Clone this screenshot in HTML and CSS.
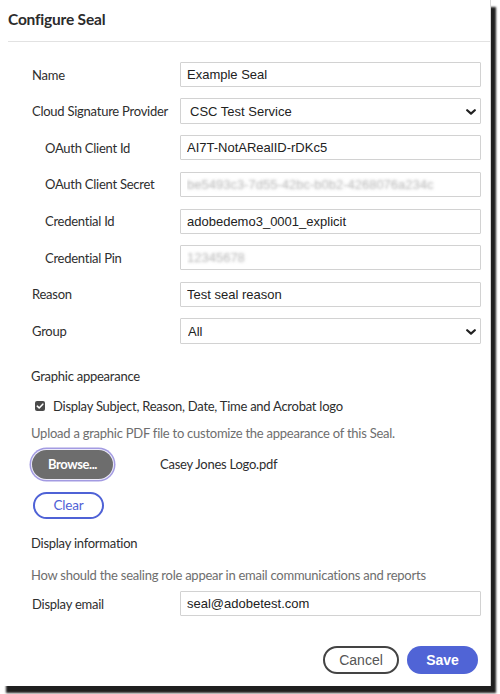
FILE: index.html
```html
<!DOCTYPE html>
<html lang="en">
<head>
<meta charset="utf-8">
<title>Configure Seal</title>
<link rel="stylesheet" href="styles.css">
</head>
<body>
<div class="dialog">
  <header class="title-bar"><h1 class="title">Configure Seal</h1></header>
  <div class="body">
    <div class="grid">
      <label class="label">Name</label>
      <input class="field" type="text" value="Example Seal">

      <label class="label">Cloud Signature Provider</label>
      <div class="select-wrap">
        <select class="select"><option>CSC Test Service</option></select>
        <svg class="chev" width="10" height="6" viewBox="0 0 10 6"><path d="M1.2 1.2 L5 4.6 L8.8 1.2" fill="none" stroke="#222" stroke-width="2.2" stroke-linecap="round" stroke-linejoin="round"/></svg>
      </div>

      <label class="label sub">OAuth Client Id</label>
      <input class="field" type="text" value="AI7T-NotARealID-rDKc5">

      <label class="label sub">OAuth Client Secret</label>
      <input class="field blurred" type="text" value="be5493c3-7d55-42bc-b0b2-4268076a234c">

      <label class="label sub">Credential Id</label>
      <input class="field" type="text" value="adobedemo3_0001_explicit">

      <label class="label sub">Credential Pin</label>
      <input class="field blurred" type="text" value="12345678">

      <label class="label">Reason</label>
      <input class="field" type="text" value="Test seal reason">

      <label class="label">Group</label>
      <div class="select-wrap">
        <select class="select group"><option>All</option></select>
        <svg class="chev" width="10" height="6" viewBox="0 0 10 6"><path d="M1.2 1.2 L5 4.6 L8.8 1.2" fill="none" stroke="#222" stroke-width="2.2" stroke-linecap="round" stroke-linejoin="round"/></svg>
      </div>
    </div>

    <h2 class="section graphic">Graphic appearance</h2>
    <div class="check-row">
      <span class="check"><svg width="10" height="10" viewBox="0 0 10 10"><path d="M2.3 5.2 L4.2 7 L7.8 3.2" fill="none" stroke="#fff" stroke-width="1.6" stroke-linecap="round" stroke-linejoin="round"/></svg></span>
      <span class="check-text">Display Subject, Reason, Date, Time and Acrobat logo</span>
    </div>
    <p class="help upload">Upload a graphic PDF file to customize the appearance of this Seal.</p>
    <div class="browse-row">
      <button class="btn-browse" type="button">Browse...</button>
      <span class="file-name">Casey Jones Logo.pdf</span>
    </div>
    <button class="btn-clear" type="button">Clear</button>

    <h2 class="section info">Display information</h2>
    <p class="help how">How should the sealing role appear in email communications and reports</p>
    <div class="grid email">
      <label class="label">Display email</label>
      <input class="field" type="text" value="seal@adobetest.com">
    </div>

    <div class="actions">
      <button class="btn-cancel" type="button">Cancel</button>
      <button class="btn-save" type="button">Save</button>
    </div>
  </div>
</div>
</body>
</html>
```

FILE: styles.css
```css
* { box-sizing: border-box; }

html, body {
  margin: 0;
  padding: 0;
  background: #fff;
}

body {
  font-family: Lato, "Noto Sans", sans-serif;
  letter-spacing: -0.25px;
  color: #2c2c2c;
  width: 500px;
  height: 694px;
  overflow: hidden;
}

.dialog {
  width: 490px;
  height: 686px;
  background: #fff;
  box-shadow: 1px 0 0 #d6d6d6, 6px 7px 2px rgba(0, 0, 0, 0.88);
}

.title-bar {
  margin-left: 8px;
  height: 42px;
  border-bottom: 1px solid #e2e2e2;
  padding-top: 9px;
}

.title {
  margin: 0;
  font-size: 15.5px;
  line-height: 20px;
  font-weight: 700;
  letter-spacing: -0.2px;
  color: #2c2c2c;
}

.body {
  padding: 20px 9px 0 32px;
}

.grid {
  display: grid;
  grid-template-columns: 148px 301px;
  row-gap: 11.67px;
  align-items: center;
}

.label {
  font-size: 13px;
  line-height: 20px;
  color: #2e2e2e;
}

.label.sub {
  padding-left: 13px;
}

.field {
  height: 25px;
  width: 301px;
  border: 1px solid #d2d2d2;
  border-radius: 1px;
  padding: 0 6px;
  font-family: "Liberation Sans", Arial, sans-serif;
  letter-spacing: 0;
  font-size: 13px;
  color: #222;
  background: #fff;
  outline: none;
}

.field.blurred {
  color: transparent;
  text-shadow: 0 0 3px rgba(130, 130, 130, 0.6);
}

.select-wrap {
  position: relative;
  height: 25px;
}

.select {
  appearance: none;
  -webkit-appearance: none;
  width: 301px;
  height: 26px;
  margin-top: -0.5px;
  border: 1px solid #d2d2d2;
  border-radius: 1px;
  padding: 0 24px 0 9px;
  font-family: "Liberation Sans", Arial, sans-serif;
  letter-spacing: 0;
  font-size: 13px;
  color: #222;
  background: #fff;
  outline: none;
}

.select.group {
  padding-left: 7px;
}

.chev {
  position: absolute;
  right: 5px;
  top: 10px;
}

.section {
  margin: 22px 0 0 -1px;
  font-size: 13px;
  line-height: 20px;
  font-weight: 400;
  color: #2e2e2e;
}

.check-row {
  display: flex;
  align-items: center;
  margin-top: 10px;
  height: 20px;
  padding-left: 3px;
}

.check {
  width: 10px;
  height: 10px;
  border-radius: 2px;
  background: #4b4b4b;
  display: flex;
}

.check-text {
  margin-left: 8px;
  font-size: 13px;
  color: #2e2e2e;
}

.help {
  margin: 0 0 0 -1px;
  font-size: 13px;
  line-height: 20px;
  color: #6e6e6e;
}

.help.upload {
  margin-top: 7px;
}

.browse-row {
  display: flex;
  align-items: center;
  margin-top: 7px;
  height: 29px;
}

.btn-browse {
  width: 81px;
  height: 29px;
  border: none;
  border-radius: 15px;
  background: #6d6d6d;
  color: #fff;
  font-family: Lato, "Noto Sans", sans-serif;
  letter-spacing: -0.4px;
  font-weight: 700;
  font-size: 13px;
  padding: 0;
  box-shadow: 0 0 0 1px #ecebf8, 0 0 0 2.5px #a39be2;
}

.file-name {
  margin-left: 47px;
  font-size: 13px;
  color: #2e2e2e;
}

.btn-clear {
  display: block;
  margin: 13px 0 0 1px;
  width: 71px;
  height: 27px;
  border: 2px solid #4f62d6;
  border-radius: 14px;
  background: #fff;
  color: #4f62d6;
  font-family: Lato, "Noto Sans", sans-serif;
  letter-spacing: -0.2px;
  font-size: 13.5px;
  padding: 0;
}

.section.info {
  margin-top: 14px;
}

.help.how {
  margin-top: 12px;
}

.grid.email {
  margin-top: 6.5px;
}

.actions {
  display: flex;
  justify-content: flex-end;
  gap: 8px;
  margin-top: 30px;
  padding-right: 3px;
}

.btn-cancel,
.btn-save {
  height: 28px;
  border-radius: 14px;
  font-family: "Liberation Sans", Arial, sans-serif;
  letter-spacing: 0;
  font-size: 14px;
  padding: 0;
}

.btn-cancel {
  width: 76px;
  border: 2px solid #444;
  background: #fff;
  color: #555;
}

.btn-save {
  width: 71px;
  border: none;
  background: #5064d6;
  color: #fff;
  font-weight: 700;
}
```
